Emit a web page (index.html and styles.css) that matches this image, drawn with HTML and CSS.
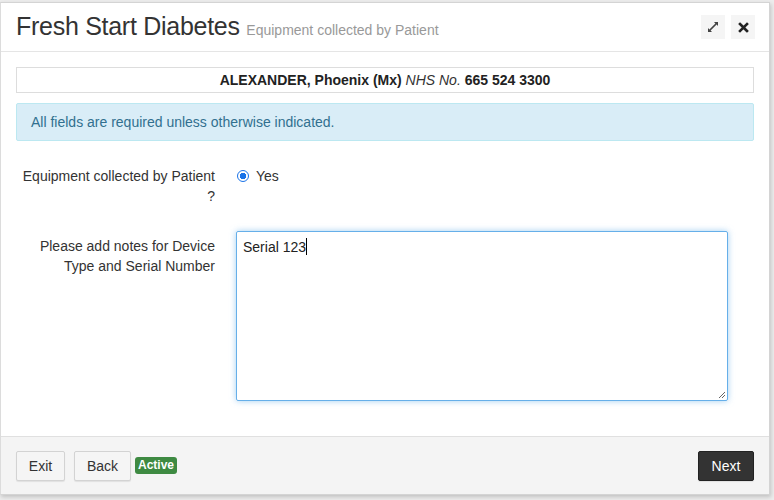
FILE: index.html
```html
<!DOCTYPE html>
<html>
<head>
<meta charset="utf-8">
<link rel="stylesheet" href="styles.css">
</head>
<body>
<div class="modal">
  <div class="modal-header">
    <h1 class="title">Fresh Start Diabetes <small class="subtitle">Equipment collected by Patient</small></h1>
    <div class="tools">
      <button class="tool" aria-label="Expand">
        <svg width="12" height="12" viewBox="0 0 12 12"><path d="M7 1h4v4l-1.4-1.4L3.6 9.6 5 11H1V7l1.4 1.4 6-6z" fill="#444"/></svg>
      </button>
      <button class="tool" aria-label="Close">
        <svg width="11" height="11" viewBox="0 0 11 11"><path d="M2 2l7 7M9 2l-7 7" stroke="#222" stroke-width="2.6" stroke-linecap="square"/></svg>
      </button>
    </div>
  </div>
  <div class="modal-body">
    <div class="patient"><b>ALEXANDER, Phoenix (Mx)</b> <i>NHS No.</i> <b>665 524 3300</b></div>
    <div class="alert">All fields are required unless otherwise indicated.</div>
    <div class="row row-radio">
      <div class="label">Equipment collected by Patient ?</div>
      <div class="field">
        <label class="radio"><span class="dot"></span>Yes</label>
      </div>
    </div>
    <div class="row row-notes">
      <div class="label">Please add notes for Device Type and Serial Number</div>
      <div class="field">
        <div class="textarea">Serial 123<span class="caret"></span>
          <svg class="grip" width="9" height="9" viewBox="0 0 9 9"><path d="M8 2L2 8M8 5L5 8" stroke="#666" stroke-width="1"/></svg>
        </div>
      </div>
    </div>
  </div>
  <div class="modal-footer">
    <div class="left">
      <button class="btn">Exit</button>
      <button class="btn">Back</button>
      <span class="badge">Active</span>
    </div>
    <button class="btn btn-dark">Next</button>
  </div>
</div>
</body>
</html>
```

FILE: styles.css
```css
html, body {
  margin: 0;
  padding: 0;
  height: 100%;
}
body {
  background: #ececec;
  font-family: "Liberation Sans", Arial, sans-serif;
  font-size: 14px;
  line-height: 20px;
  color: #333;
}
.modal {
  margin: 2px 4px 0 0;
  height: 493px;
  background: #fff;
  border: 1px solid #d4d4d4;
  border-left: 1px solid #dcdcdc;
  box-shadow: 1px 2px 4px rgba(0,0,0,0.18);
  display: flex;
  flex-direction: column;
  box-sizing: border-box;
}
.modal-header {
  height: 48px;
  border-bottom: 1px solid #e5e5e5;
  display: flex;
  align-items: center;
  justify-content: space-between;
  padding: 0 14px 0 15px;
  box-sizing: content-box;
}
.title {
  margin: 0;
  margin-top: 2px;
  font-weight: normal;
  font-size: 25px;
  line-height: 30px;
  color: #333;
  letter-spacing: -0.28px;
}
.subtitle {
  font-size: 14px;
  color: #999;
  letter-spacing: 0;
}
.tools {
  display: flex;
  gap: 6px;
}
.tool {
  width: 24px;
  height: 24px;
  padding: 0;
  border: 0;
  background: #f5f5f5;
  display: flex;
  align-items: center;
  justify-content: center;
}
.modal-body {
  flex: 1;
  padding: 15px 15px 0 15px;
}
.patient {
  border: 1px solid #ddd;
  height: 24px;
  line-height: 24px;
  text-align: center;
  font-size: 14px;
  color: #222;
}
.patient b { font-weight: bold; }
.patient i { color: #333; }
.alert {
  margin-top: 10px;
  background: #d9edf7;
  border: 1px solid #bce8f1;
  color: #31708f;
  height: 36px;
  line-height: 36px;
  padding: 0 14px;
  border-radius: 2px;
}
.row {
  display: grid;
  grid-template-columns: 199px 1fr;
  column-gap: 21px;
}
.row-radio {
  margin-top: 25px;
}
.row-notes {
  margin-top: 25px;
}
.row-notes .label {
  padding-top: 5px;
}
.label {
  text-align: right;
  color: #333;
}
.radio {
  display: flex;
  align-items: center;
  gap: 7px;
  padding-left: 1px;
}
.dot {
  width: 10px;
  height: 10px;
  border: 1px solid #1a73e8;
  border-radius: 50%;
  background: radial-gradient(circle, #1a73e8 0 3px, #fff 3.5px);
}
.textarea {
  position: relative;
  width: 492px;
  height: 170px;
  border: 1px solid #66afe9;
  border-radius: 2px;
  box-shadow: 0 0 6px rgba(102,175,233,0.6);
  padding: 5px 6px;
  box-sizing: border-box;
  color: #222;
}
.caret {
  display: inline-block;
  width: 1px;
  height: 17px;
  background: #000;
  vertical-align: -3px;
}
.grip {
  position: absolute;
  right: 1px;
  bottom: 1px;
}
.modal-footer {
  height: 57px;
  border-top: 1px solid #e0e0e0;
  background: #f4f4f4;
  display: flex;
  align-items: center;
  justify-content: space-between;
  padding: 0 15px;
}
.left {
  display: flex;
  align-items: center;
  gap: 9px;
}
.btn {
  font-family: "Liberation Sans", Arial, sans-serif;
  font-size: 14px;
  height: 30px;
  padding: 0 14px;
  background: #f5f5f5;
  border: 1px solid #d3d3d3;
  border-radius: 2px;
  color: #333;
  box-shadow: 0 1px 1px rgba(0,0,0,0.08);
}
.left .btn:first-child { width: 49px; padding: 0; }
.left .btn:nth-child(2) { width: 57px; padding: 0; }
.badge {
  margin-left: -5px;
  background: #3e8a42;
  color: #fff;
  font-weight: bold;
  font-size: 12px;
  line-height: 17px;
  padding: 0 3px;
  border-radius: 3px;
}
.btn-dark {
  background: #333;
  border-color: #222;
  color: #fff;
  width: 56px;
  padding: 0;
}
```
